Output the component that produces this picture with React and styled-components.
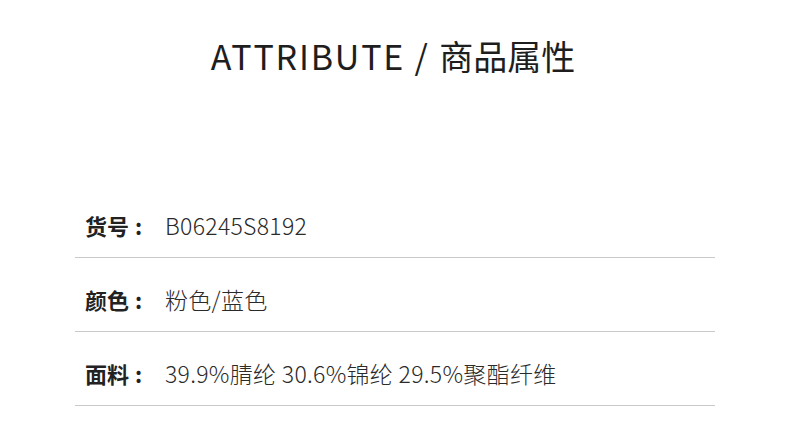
import React from "react";
import styled, { createGlobalStyle } from "styled-components";

const Global = createGlobalStyle`
  html, body { margin: 0; padding: 0; background: #fff; }
  body { font-family: "Noto Sans CJK SC", "Noto Sans", sans-serif; }
`;

const Page = styled.div`
  width: 790px;
  height: 423px;
  background: #fff;
  padding-top: 36px;
  box-sizing: border-box;
  overflow: hidden;
`;

const Title = styled.h1`
  margin: 0;
  height: 40px;
  line-height: 40px;
  text-align: center;
  font-size: 34px;
  font-weight: 400;
  color: #1e1e1e;
  transform: translateX(-2px);
`;

const Latin = styled.span`
  letter-spacing: 1.8px;
`;

const List = styled.div`
  margin: 108px 75px 0 75px;
  width: 640px;
`;

const Row = styled.div`
  display: flex;
  align-items: center;
  padding: 26px 0 17px 10px;
  height: 30px;
  border-bottom: 1px solid #c9c9c9;
`;

const Label = styled.span`
  width: 80px;
  flex: none;
  font-size: 22px;
  line-height: 30px;
  font-weight: 700;
  color: #222;
`;

const Colon = styled.span`
  margin-left: 6px;
`;

const Value = styled.span`
  font-size: 23px;
  line-height: 30px;
  font-weight: 300;
  letter-spacing: 0.3px;
  color: #2a2a2a;
  white-space: nowrap;
`;

const rows = [
  ["货号", "B06245S8192"],
  ["颜色", "粉色/蓝色"],
  ["面料", "39.9%腈纶 30.6%锦纶 29.5%聚酯纤维"],
];

export default function App() {
  return (
    <>
      <Global />
      <Page>
        <Title>
          <Latin>ATTRIBUTE / </Latin>商品属性
        </Title>
        <List>
          {rows.map(([k, v]) => (
            <Row key={k}>
              <Label>
                {k}
                <Colon>:</Colon>
              </Label>
              <Value>{v}</Value>
            </Row>
          ))}
        </List>
      </Page>
    </>
  );
}
